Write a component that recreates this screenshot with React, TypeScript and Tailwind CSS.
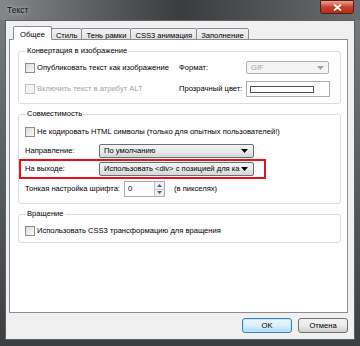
import React from 'react';

function Checkbox({ disabled }: { disabled?: boolean }) {
    return (
        <span
            className={`inline-block w-[10px] h-[10px] shrink-0 border ${
                disabled ? 'border-[#c4c4c4] bg-[#f4f4f4]' : 'border-[#8e8f8f] bg-gradient-to-br from-[#dcdcdc] to-[#fbfbfb]'
            }`}
        />
    );
}

function Arrow({ color = '#000' }: { color?: string }) {
    return (
        <svg width="7" height="4" viewBox="0 0 7 4">
            <path d="M0 0h7L3.5 4z" fill={color} />
        </svg>
    );
}

function Combo({ text, width, disabled }: { text: string; width: string; disabled?: boolean }) {
    if (disabled) {
        return (
            <div className={`${width} h-[13px] flex items-center justify-between border border-[#adb2b5] rounded-[2px] bg-[#f4f4f4] pl-[4px] pr-[4px] text-[#a3a3a3]`}>
                <span>{text}</span>
                <Arrow color="#a3a3a3" />
            </div>
        );
    }
    return (
        <div className={`${width} h-[14px] flex items-center justify-between border border-[#707070] rounded-[2px] bg-gradient-to-b from-[#f3f3f3] via-[#ebebeb] to-[#d6d6d6] pl-[4px] pr-[5px]`}>
            <span className="whitespace-nowrap">{text}</span>
            <Arrow />
        </div>
    );
}

function Group({ title, children }: { title: string; children: React.ReactNode }) {
    return (
        <fieldset className="border border-[#d5dfe5] rounded-[3px] px-[6px] pb-[6px]">
            <legend className="ml-[1px] px-[1px] leading-[10px]">{title}</legend>
            {children}
        </fieldset>
    );
}

const tabs = ['Общее', 'Стиль', 'Тень рамки', 'CSS3 анимация', 'Заполнение'];

export default function App() {
    return (
        <div
            className="w-[360px] h-[346px] overflow-hidden bg-gradient-to-r from-[#2a2c2e] via-[#55585b] to-[#1b1c1d] text-[7.6px] leading-[10px] text-black whitespace-nowrap"
            style={{ fontFamily: '"Liberation Sans", Arial, sans-serif' }}
        >
            <div className="h-full flex flex-col px-[5px] pb-[6px] bg-gradient-to-b from-[#7b7e81] via-[#5a5d60] to-[#3c3e40]">
                {/* title bar */}
                <div className="relative h-[20px] flex items-start pt-[5px] bg-gradient-to-r from-[#85888b] via-[#3a3c3e] to-[#6a6d70] -mx-[5px] px-[7px]">
                    <span className="text-[8.5px] leading-[10px] text-[#111] [text-shadow:0_0_4px_#d8d8d8]">Текст</span>
                    <div className="absolute right-[6px] top-0 w-[34px] h-[14px] rounded-b-[3px] border border-[#5a1a12] bg-gradient-to-b from-[#e8a08f] via-[#c8412b] to-[#b1301c] flex items-center justify-center">
                        <svg width="9" height="7" viewBox="0 0 9 7">
                            <path d="M1 0.5l7 6M8 0.5l-7 6" stroke="#fff" strokeWidth="1.8" />
                        </svg>
                    </div>
                </div>

                {/* client */}
                <div className="flex-1 flex flex-col bg-[#f0f0f0] border border-[#5d6063] pl-[3px] pr-[6px]">
                    <div className="flex items-end h-[19px] pl-[4px] -mb-px">
                        {tabs.map((t, i) =>
                            i === 0 ? (
                                <div key={t} className="relative z-10 h-[14px] px-[6px] pt-[3px] bg-white border border-[#898c95] border-b-white rounded-t-[2px]">
                                    {t}
                                </div>
                            ) : (
                                <div key={t} className="h-[12px] px-[4px] pt-[2px] -ml-px bg-gradient-to-b from-[#f2f2f2] to-[#e3e3e3] border border-[#898c95] rounded-t-[2px]">
                                    {t}
                                </div>
                            )
                        )}
                    </div>

                    <div className="h-[274px] bg-white border border-[#898c95] pt-[6px] pl-[8px] pr-[6px] flex flex-col gap-[5px]">
                        <Group title="Конвертация в изображение">
                            <div className="grid grid-cols-[154px_67px_83px] items-center gap-y-[7px] pt-[5px]">
                                <div className="flex items-center gap-[2px]">
                                    <Checkbox />
                                    <span>Опубликовать текст как изображение</span>
                                </div>
                                <span>Формат:</span>
                                <Combo text="GIF" width="w-[83px]" disabled />
                                <div className="flex items-center gap-[2px] text-[#a3a3a3]">
                                    <Checkbox disabled />
                                    <span>Включить текст в атрибут ALT</span>
                                </div>
                                <span>Прозрачный цвет:</span>
                                <div className="w-[84px] h-[16px] border border-[#abadb3] bg-white flex items-center pl-[3px]">
                                    <div className="w-[64px] h-[7px] border border-[#505050]" />
                                </div>
                            </div>
                        </Group>

                        <Group title="Совместимость">
                            <div className="flex flex-col pt-[8px]">
                                <div className="flex items-center gap-[2px]">
                                    <Checkbox />
                                    <span>Не кодировать HTML символы (только для опытных пользователей!)</span>
                                </div>
                                <div className="flex items-center mt-[7px]">
                                    <span className="w-[74px]">Направление:</span>
                                    <Combo text="По умолчанию" width="w-[155px]" />
                                </div>
                                <div className="flex items-center -ml-[6px] mt-[1px] w-[247px] h-[20px] border-2 border-[#e8101a] pl-[4px]">
                                    <span className="w-[74px]">На выходе:</span>
                                    <Combo text="Использовать <div> с позицией для ка" width="w-[155px]" />
                                </div>
                                <div className="flex items-center mt-[2px]">
                                    <span className="w-[99px]">Тонкая настройка шрифта:</span>
                                    <div className="w-[41px] h-[16px] border border-[#abadb3] bg-white flex">
                                        <span className="flex-1 pl-[3px] pt-[2px]">0</span>
                                        <div className="w-[10px] flex flex-col border-l border-[#c4c4c4]">
                                            <div className="flex-1 flex items-center justify-center bg-[#f0f0f0] border-b border-[#c4c4c4]">
                                                <svg width="5" height="3" viewBox="0 0 5 3"><path d="M0 3h5L2.5 0z" fill="#4d6185" /></svg>
                                            </div>
                                            <div className="flex-1 flex items-center justify-center bg-[#f0f0f0]">
                                                <svg width="5" height="3" viewBox="0 0 5 3"><path d="M0 0h5L2.5 3z" fill="#4d6185" /></svg>
                                            </div>
                                        </div>
                                    </div>
                                    <span className="ml-[9px]">(в пикселях)</span>
                                </div>
                            </div>
                        </Group>

                        <Group title="Вращение">
                            <div className="flex items-center gap-[2px] pt-[7px]">
                                <Checkbox />
                                <span>Использовать CSS3 трансформацию для вращения</span>
                            </div>
                        </Group>
                    </div>

                    <div className="flex justify-end gap-[6px] mt-[5px]">
                        <button className="w-[50px] h-[15px] border border-[#3c7fb1] rounded-[3px] bg-gradient-to-b from-[#eaf6fd] via-[#d9f0fc] to-[#a7d9f5] shadow-[inset_0_0_0_1px_#c4e5f6] text-[7.6px] leading-[10px]">
                            OK
                        </button>
                        <button className="w-[50px] h-[15px] border border-[#707070] rounded-[3px] bg-gradient-to-b from-[#f2f2f2] via-[#ebebeb] to-[#cfcfcf] text-[7.6px] leading-[10px]">
                            Отмена
                        </button>
                    </div>
                </div>
            </div>
        </div>
    );
}
